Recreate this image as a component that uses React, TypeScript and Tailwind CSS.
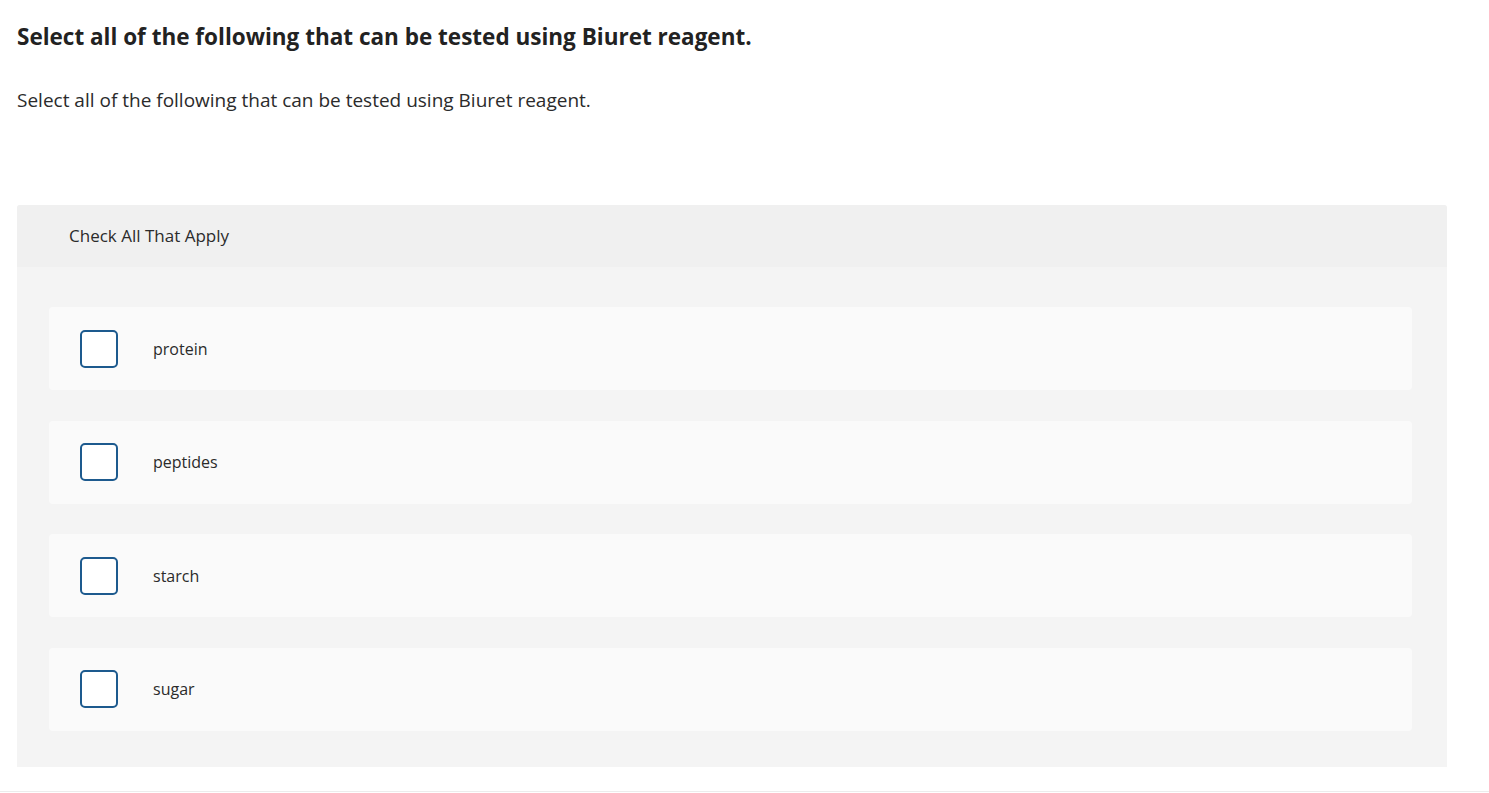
const OPTIONS = ["protein", "peptides", "starch", "sugar"];

function OptionRow({ label }: { label: string }) {
  return (
    <div className="flex h-[83px] items-center rounded-[4px] bg-[#fafafa] pl-[31px]">
      <div className="h-[38px] w-[38px] rounded-[5px] border-2 border-[#1d5a8e] bg-white" />
      <span className="ml-[35px] text-[16px] text-[#2b2b2b]">{label}</span>
    </div>
  );
}

export default function App() {
  return (
    <div
      className="min-h-[793px] w-full bg-white text-[#222]"
      style={{ fontFamily: "'Open Sans', Lato, sans-serif" }}
    >
      <div className="px-[17px] pt-[22px]">
        <h1 className="text-[22.5px] font-bold leading-[30px] text-[#222]">
          Select all of the following that can be tested using Biuret reagent.
        </h1>
        <p className="mt-[35px] text-[19px] leading-[26px] text-[#2b2b2b]">
          Select all of the following that can be tested using Biuret reagent.
        </p>
      </div>
      <div className="mx-[17px] mt-[92px] w-[1430px] overflow-hidden rounded-t-[3px] bg-[#f4f4f4]">
        <div className="flex h-[62px] items-center bg-[#f0f0f0] pl-[52px] text-[17px] text-[#2b2b2b]">
          Check All That Apply
        </div>
        <div className="flex flex-col gap-[30.6px] pb-[36px] pl-[32px] pr-[35px] pt-[40px]">
          {OPTIONS.map((o) => (
            <OptionRow key={o} label={o} />
          ))}
        </div>
      </div>
      <div className="mt-[24px] h-px w-full bg-[#ececec]" />
    </div>
  );
}
